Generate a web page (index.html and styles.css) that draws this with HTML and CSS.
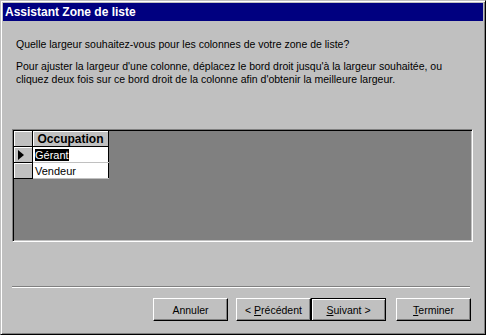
FILE: index.html
```html
<!DOCTYPE html>
<html lang="fr">
  <head>
    <meta charset="UTF-8" />
    <meta name="viewport" content="width=device-width, initial-scale=1.0" />
    <title>Assistant Zone de liste</title>
    <link rel="stylesheet" href="styles.css">
  </head>
  <body>
    <div class="window">
      <div class="titlebar">Assistant Zone de liste</div>

      <div class="wizard">
        <p class="question">Quelle largeur souhaitez-vous pour les colonnes de votre zone de liste?</p>
        <p class="help">
          Pour ajuster la largeur d'une colonne, déplacez le bord droit jusqu'à la largeur souhaitée, ou<br>
          cliquez deux fois sur ce bord droit de la colonne afin d'obtenir la meilleure largeur.
        </p>

        <div class="well">
          <table class="grid">
            <tr>
              <th class="selector"></th>
              <th class="col">Occupation</th>
            </tr>
            <tr>
              <td class="selector"><span class="pointer"></span></td>
              <td class="cell"><span class="selected">Gérant</span></td>
            </tr>
            <tr>
              <td class="selector"></td>
              <td class="cell">Vendeur</td>
            </tr>
          </table>
        </div>

        <div class="separator"></div>

        <div class="buttons">
          <button class="btn">Annuler</button>
          <div class="nav">
            <button class="btn">&lt; <u>P</u>récédent</button>
            <button class="btn default"><u>S</u>uivant &gt;</button>
          </div>
          <button class="btn"><u>T</u>erminer</button>
        </div>
      </div>
    </div>
  </body>
</html>
```

FILE: styles.css
```css
body {
  margin: 0;
  font-family: "Liberation Sans", Arial, sans-serif;
  font-size: 10.5px;
  color: #000;
  background: #c0c0c0;
}

.window {
  width: 486px;
  height: 335px;
  box-sizing: border-box;
  background: #c0c0c0;
  border: 1px solid;
  border-color: #c0c0c0 #000 #000 #c0c0c0;
  box-shadow: inset 1px 1px #fff, inset -1px -1px #808080;
  padding: 2px;
  display: flex;
  flex-direction: column;
}

.titlebar {
  height: 18px;
  line-height: 18px;
  background: #000080;
  color: #fff;
  font-weight: bold;
  font-size: 12px;
  padding-left: 2px;
}

.wizard {
  padding: 17px 10px 0 9px;
}

.question {
  margin: 0 0 9px 4px;
  line-height: 13px;
}

.help {
  margin: 0 0 43px 4px;
  line-height: 13px;
}

.well {
  height: 113px;
  box-sizing: border-box;
  background: #808080;
  border: 1px solid;
  border-color: #808080 #fff #fff #808080;
  box-shadow: inset 1px 1px #000, inset -1px -1px #c0c0c0;
  padding: 1px;
}

.grid {
  border-collapse: collapse;
}

.grid th,
.grid td {
  padding: 0;
  height: 15px;
  border: 1px solid #000;
  border-top: none;
  border-left: none;
}

.grid .selector {
  width: 18px;
  background: #c0c0c0;
  box-shadow: inset 1px 1px #fff;
}

.grid .col {
  width: 75px;
  background: #c0c0c0;
  box-shadow: inset 1px 1px #fff;
  font-size: 12px;
  font-weight: bold;
  text-align: center;
}

.grid .cell {
  background: #fff;
  border-bottom-color: #c0c0c0;
  padding-left: 2px;
  font-size: 11px;
  line-height: 14px;
}

.selected {
  background: #000;
  color: #fff;
}

.pointer {
  display: block;
  width: 0;
  height: 0;
  margin-left: 4px;
  border-top: 5px solid transparent;
  border-bottom: 5px solid transparent;
  border-left: 6px solid #000;
}

.separator {
  margin: 44px 3px 0 0;
  height: 1px;
  background: #808080;
  border-bottom: 1px solid #fff;
}

.buttons {
  display: flex;
  justify-content: flex-end;
  gap: 8px;
  margin: 10px 2px 0 0;
}

.nav {
  display: flex;
  margin-right: 2px;
}

.btn {
  width: 75px;
  height: 23px;
  padding: 0;
  font-family: "Liberation Sans", Arial, sans-serif;
  font-size: 10.5px;
  color: #000;
  background: #c0c0c0;
  border: 1px solid;
  border-color: #fff #000 #000 #fff;
  box-shadow: inset -1px -1px #808080;
}

.btn.default {
  border-color: #000;
  box-shadow: inset 1px 1px #fff, inset -1px -1px #808080;
}
```
